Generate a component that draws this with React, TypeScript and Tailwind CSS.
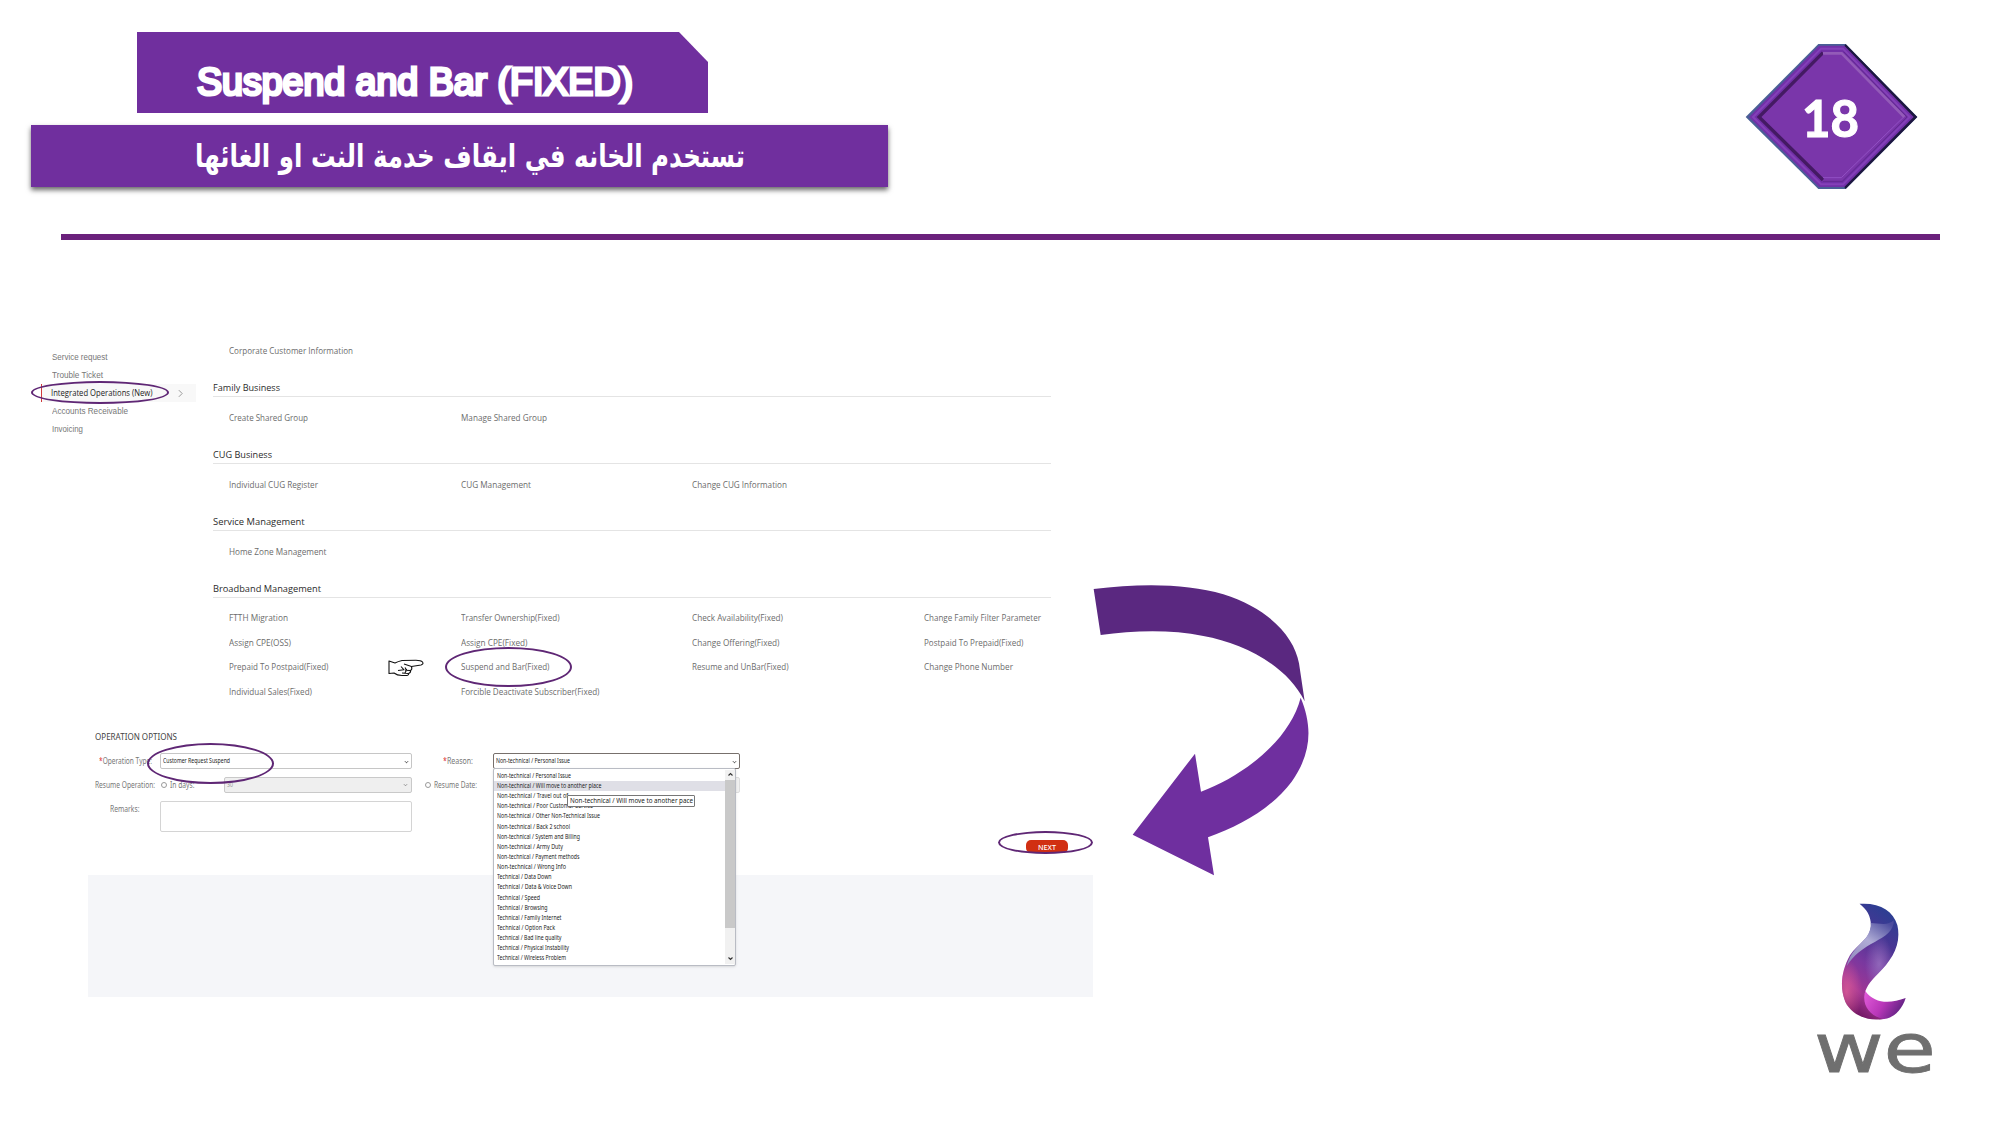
import { useLayoutEffect, useRef, type ReactNode } from "react";

/** Single line of text, condensed or widened so that it takes exactly `w` pixels. */
function Fit({ w, className = "", children }: { w: number; className?: string; children: ReactNode }) {
  const inner = useRef<HTMLSpanElement>(null);
  useLayoutEffect(() => {
    const el = inner.current;
    if (!el) return;
    el.style.transform = "none";
    const natural = el.getBoundingClientRect().width;
    if (natural > 0) el.style.transform = `scaleX(${w / natural})`;
  }, [w]);
  return (
    <span className={`block shrink-0 whitespace-nowrap ${className}`} style={{ width: w }}>
      <span ref={inner} className="inline-block origin-left">
        {children}
      </span>
    </span>
  );
}

type Item = [string, number] | null;

const sidebar: [string, number][] = [
  ["Service request", 55.5],
  ["Trouble Ticket", 51],
  ["Integrated Operations (New)", 101.5],
  ["Accounts Receivable", 76],
  ["Invoicing", 31],
];

const groups: { title: string; w: number; items: Item[] }[] = [
  { title: "Family Business", w: 67, items: [["Create Shared Group", 79], ["Manage Shared Group", 86]] },
  {
    title: "CUG Business",
    w: 59,
    items: [["Individual CUG Register", 89], ["CUG Management", 70], ["Change CUG Information", 95]],
  },
  { title: "Service Management", w: 91.5, items: [["Home Zone Management", 97.5]] },
];

const broadband: Item[] = [
  ["FTTH Migration", 59],
  ["Transfer Ownership(Fixed)", 98.5],
  ["Check Availability(Fixed)", 91],
  ["Change Family Filter Parameter", 117],
  ["Assign CPE(OSS)", 62],
  ["Assign CPE(Fixed)", 66.5],
  ["Change Offering(Fixed)", 87.5],
  ["Postpaid To Prepaid(Fixed)", 99.5],
  ["Prepaid To Postpaid(Fixed)", 99.5],
  ["Suspend and Bar(Fixed)", 88.5],
  ["Resume and UnBar(Fixed)", 96.5],
  ["Change Phone Number", 89],
  ["Individual Sales(Fixed)", 83],
  ["Forcible Deactivate Subscriber(Fixed)", 138.5],
];

const reasons: [string, number][] = [
  ["Non-technical / Personal Issue", 74],
  ["Non-technical / Will move to another place", 104.5],
  ["Non-technical / Travel out of", 71],
  ["Non-technical / Poor Customer Service", 96],
  ["Non-technical / Other Non-Technical Issue", 103],
  ["Non-technical / Back 2 school", 73],
  ["Non-technical / System and Billing", 83],
  ["Non-technical / Army Duty", 66],
  ["Non-technical / Payment methods", 82.5],
  ["Non-technical / Wrong Info", 69],
  ["Technical / Data Down", 54.5],
  ["Technical / Data & Voice Down", 75],
  ["Technical / Speed", 43],
  ["Technical / Browsing", 50.5],
  ["Technical / Family Internet", 64.5],
  ["Technical / Option Pack", 58],
  ["Technical / Bad line quality", 64.5],
  ["Technical / Physical Instability", 72],
  ["Technical / Wireless Problem", 69],
];

function Chevron({ className = "", d = "M1 1.5 3 3.5 5 1.5" }: { className?: string; d?: string }) {
  return (
    <svg viewBox="0 0 6 5" className={className} fill="none" stroke="currentColor" strokeWidth="1.1">
      <path d={d} />
    </svg>
  );
}

function Ring({ className }: { className: string }) {
  return <div className={`absolute rounded-[50%] border-2 border-[#5f2775] ${className}`} />;
}

function PageBadge() {
  return (
    <div className="relative mt-[43px] mr-[82px] h-[147px] w-[173px]">
      <svg viewBox="0 0 519 441" className="h-full w-full">
        <polygon points="2,222 220,3 302,3 517,222 302,438 220,438" fill="#4a5f96" />
        <polygon points="302,3 517,222 302,438 290,420 500,222 290,20" fill="#1d1740" />
        <polygon points="12,222 222,8 298,8 506,222 298,432 222,432" fill="#7230a8" />
        <polygon points="24,222 228,17 294,17 494,222 294,424 228,424" fill="none" stroke="#8440b8" strokeWidth="6" />
        <polygon points="36,222 232,26 290,26 484,222 290,414 232,414" fill="#7a36aa" />
        <path d="M234 29 42 222 234 411" fill="none" stroke="#441a63" strokeWidth="10" />
        <path d="M234 31H290L478 222" fill="none" stroke="#935bb8" strokeWidth="8" />
        <path d="M296 26 486 222 292 415H234" fill="none" stroke="#632a91" strokeWidth="3" />
        <path d="M234 404H289L476 222" fill="none" stroke="#9150c4" strokeWidth="3" />
      </svg>
      <div className="absolute inset-0 flex items-center justify-center pr-[2px] font-['Lato'] text-[52px] leading-none font-bold text-white [-webkit-text-stroke:1.2px_white]">
        <Fit w={57}>18</Fit>
      </div>
    </div>
  );
}

function Header() {
  return (
    <header className="h-[234px]">
      <div className="flex justify-between">
        <div className="flex flex-col pt-8">
          <h1 className="ml-[137px] flex h-[81px] w-[571px] items-center bg-[#702f9e] pt-[17px] pl-[60px] font-['Liberation_Sans'] text-[39px] leading-none text-white [-webkit-text-stroke:3.2px_white] [clip-path:polygon(0_0,542px_0,100%_30px,100%_100%,0_100%)]">
            <Fit w={436}>Suspend and Bar (FIXED)</Fit>
          </h1>
          <div className="mt-3 ml-[31px] flex h-[62px] w-[857px] items-center bg-[#702f9e] pl-[164px] font-['DejaVu_Sans'] text-[32px] leading-none font-bold text-white shadow-[0_3px_5px_rgba(0,0,0,0.6)]">
            <Fit w={550}>
              <span dir="rtl" lang="ar">تستخدم الخانه في ايقاف خدمة النت او الغائها</span>
            </Fit>
          </div>
        </div>
        <PageBadge />
      </div>
    </header>
  );
}

function Cell({ item }: { item: Item }) {
  return item ? <Fit w={item[1]}>{item[0]}</Fit> : <span />;
}

function GroupTitle({ title, w }: { title: string; w: number }) {
  return (
    <h2 className="h-[18px] border-b border-[#e4e4e4] text-[9.5px] leading-[17px] text-[#2b2b2b]">
      <Fit w={w}>{title}</Fit>
    </h2>
  );
}

function Operations() {
  return (
    <section className="mt-[102px] ml-[41px] flex h-[386px] font-['Open_Sans'] text-[9.3px] leading-[18px] text-[#6c6c6c]">
      <nav className="mt-[6px] w-[155px]">
        {sidebar.map(([label, w], i) =>
          i === 2 ? (
            <div key={label} className="flex h-[18px] items-center justify-between border-l border-[#d0393b] bg-[#f8f8f8] pr-[13px] pl-[9px] text-[#222]">
              <Fit w={w}>{label}</Fit>
              <svg viewBox="0 0 6 10" className="h-[9px] w-[5px]" fill="none" stroke="#999" strokeWidth="1.2">
                <path d="M1 1 5 5 1 9" />
              </svg>
            </div>
          ) : (
            <div key={label} className="h-[18px] pl-[10.5px] font-['Liberation_Sans'] text-[9px] text-[#777]">
              <Fit w={w}>{label}</Fit>
            </div>
          ),
        )}
      </nav>
      <div className="ml-[17px] w-[838px]">
        <div className="h-[37px] pl-4">
          <Fit w={124}>Corporate Customer Information</Fit>
        </div>
        {groups.map((g) => (
          <div key={g.title} className="h-[67px]">
            <GroupTitle title={g.title} w={g.w} />
            <div className="mt-[12px] grid grid-cols-[repeat(4,231.7px)] pl-4">
              {g.items.map((it, i) => (
                <Cell key={i} item={it} />
              ))}
            </div>
          </div>
        ))}
        <GroupTitle title="Broadband Management" w={108} />
        <div className="mt-[11px] grid auto-rows-[24.5px] grid-cols-[repeat(4,231.7px)] pl-4">
          {broadband.map((it, i) => (
            <Cell key={i} item={it} />
          ))}
        </div>
      </div>
    </section>
  );
}

function Radio() {
  return <span className="mr-[2.5px] h-[6px] w-[6px] shrink-0 rounded-full border border-[#9a9a9a]" />;
}

function ReasonMenu() {
  return (
    <div className="absolute top-[14px] left-[-1px] z-10 flex h-[198px] w-[243px] rounded-[2px] border border-[#b9bcc4] bg-white shadow-sm">
      <ul className="flex-1 pt-[2px] text-[6.4px] text-[#222]">
        {reasons.map(([label, w], i) => (
          <li key={label} className={`flex h-[10.15px] items-center pl-[3px] leading-none ${i === 1 ? "bg-[#dfdfe6]" : ""}`}>
            <Fit w={w}>{label}</Fit>
          </li>
        ))}
      </ul>
      <div className="my-[1px] flex w-[10px] flex-col items-center bg-[#f1f1f1] text-[#333]">
        <Chevron className="mt-[2px] h-[5px] w-[7px]" d="M1 3.5 3 1.5 5 3.5" />
        <div className="mt-[3px] h-[148px] w-full bg-[#c9c9c9]" />
        <Chevron className="mt-auto mb-[3px] h-[5px] w-[7px]" />
      </div>
      <div className="absolute top-[26px] left-[73px] flex h-[11.5px] w-[128px] items-center rounded-[1px] border border-[#777] bg-white pl-[2px] text-[7.5px] leading-none text-[#222]">
        <Fit w={123}>Non-technical / Will move to another pace</Fit>
      </div>
    </div>
  );
}

function OperationOptions() {
  return (
    <section className="ml-[88px] w-[1005px] font-['Noto_Sans'] text-[8px] leading-none text-[#777]">
      <div className="h-[147px] pl-[7px]">
        <h2 className="flex h-[18px] items-center text-[8.5px] text-[#444]">
          <Fit w={82}>OPERATION OPTIONS</Fit>
        </h2>
        <div className="mt-[7px] flex h-4">
          <div className="flex w-[65px] items-center pb-[1px] pl-[4px]">
            <Fit w={53}>
              <span className="text-[#d33]">*</span>Operation Type:
            </Fit>
          </div>
          <div className="flex w-[252px] items-center justify-between rounded-[2px] border border-[#c6c6c6] bg-white pt-[1px] pr-[2px] pl-[2px] text-[6.6px] text-[#222]">
            <Fit w={67}>Customer Request Suspend</Fit>
            <Chevron className="h-[4px] w-[5px] text-[#333]" />
          </div>
          <div className="flex w-[81px] items-center pb-[1px] pl-[31px]">
            <Fit w={30}>
              <span className="text-[#d33]">*</span>Reason:
            </Fit>
          </div>
          <div className="relative flex w-[247px] items-center justify-between rounded-[2px] border border-[#77706c] bg-white pt-[1px] pr-[2px] pl-[2px] text-[6.6px] text-[#222]">
            <Fit w={74}>Non-technical / Personal Issue</Fit>
            <Chevron className="h-[4px] w-[5px] text-[#333]" />
            <ReasonMenu />
          </div>
        </div>
        <div className="mt-2 flex h-4">
          <div className="flex w-[65px] items-center">
            <Fit w={60}>Resume Operation:</Fit>
          </div>
          <div className="flex w-[64px] items-center pl-[1px]">
            <Radio />
            <Fit w={24.5}>In days:</Fit>
          </div>
          <div className="flex w-[188px] items-center justify-between rounded-[2px] border border-[#c9c9c9] bg-[#efefef] pr-[3px] pl-[2px] text-[6.4px] text-[#999]">
            <Fit w={6}>30</Fit>
            <Chevron className="h-[4px] w-[5px] text-[#888]" />
          </div>
          <div className="flex w-[81px] items-center pl-[13px]">
            <Radio />
            <Fit w={43}>Resume Date:</Fit>
          </div>
          <div className="w-[247px] rounded-[2px] border border-[#dedede] bg-[#f1f1f1]" />
        </div>
        <div className="mt-2 flex h-[31px]">
          <div className="w-[65px] pt-[4px] pl-[15px]">
            <Fit w={29.5}>Remarks:</Fit>
          </div>
          <div className="w-[252px] rounded-[2px] border border-[#d4d4d4] bg-white" />
        </div>
        <div className="mt-2 flex justify-end pr-[25px]">
          <button className="flex h-[13px] w-[42px] items-center justify-center rounded-[5px] bg-[#d12f12] pt-[1px] text-[7px] leading-none font-medium text-white">
            <Fit w={18}>NEXT</Fit>
          </button>
        </div>
      </div>
      <div className="h-[122px] bg-[#f5f6f9]" />
    </section>
  );
}

function CurvedArrow() {
  return (
    <svg viewBox="0 0 810 990" className="absolute top-[560px] left-[1070px] h-[330px] w-[270px]">
      <path d="M71 87C210 70 350 70 460 103C600 148 672 230 687 310L704 424C650 315 520 250 400 228C300 208 190 212 92 225Z" fill="#5a2880" />
      <path d="M692 413C728 500 725 580 665 665C605 745 510 798 414 832L432 946 188 824 375 581 393 695C520 648 660 540 692 413Z" fill="#6f2f9f" />
    </svg>
  );
}

function PointingHand() {
  return (
    <svg viewBox="0 0 36 18" className="absolute top-[659px] left-[388px] h-[18px] w-[36px]" fill="white" stroke="#111" strokeWidth="1.1" strokeLinejoin="round">
      <path d="M1 2V14.5L6 14Q9 16.5 14 16.5H19Q21 16 20.5 14.5Q23 14 22.5 11.5Q24.5 10.5 23.5 7.5L33 6Q36 5 34.5 3Q33 1.2 28 1.2L14 1.5Q10 2.5 7 4L1 2Z" />
      <path d="M16 5 23.5 7.5M10 11.5 16 10.8 13 7.5M17 11.3 22.5 11.5M14 14 20.5 14.5M17 8.5 18.5 11 17 14" fill="none" />
    </svg>
  );
}

function BrandLogo() {
  const body =
    "M209 70C270 66 310 90 323 135C336 195 305 240 265 280C240 305 225 325 223 350C222 385 245 408 280 417C235 426 185 405 166 365C148 320 155 270 180 225C205 190 240 175 243 140C245 110 232 88 209 70Z";
  return (
    <div className="absolute top-[900px] left-[1814px] w-[122px]">
      <svg viewBox="150 60 205 365" className="ml-[26px] h-[122px] w-[68px]">
        <defs>
          <linearGradient id="body" x1="0.7" y1="0" x2="0.35" y2="1">
            <stop offset="0" stopColor="#2a3f92" />
            <stop offset="0.3" stopColor="#4b3594" />
            <stop offset="0.55" stopColor="#79389f" />
            <stop offset="0.8" stopColor="#a23593" />
            <stop offset="1" stopColor="#6f1561" />
          </linearGradient>
          <linearGradient id="fold" x1="0.8" y1="0" x2="0.1" y2="1">
            <stop offset="0" stopColor="#4c4c9e" />
            <stop offset="0.45" stopColor="#b0add6" />
            <stop offset="1" stopColor="#8f86bb" />
          </linearGradient>
          <linearGradient id="tail" x1="0" y1="0.2" x2="1" y2="0.6">
            <stop offset="0" stopColor="#e05ad8" />
            <stop offset="0.5" stopColor="#b836b8" />
            <stop offset="1" stopColor="#56207c" />
          </linearGradient>
          <radialGradient id="glow" cx="0.08" cy="0.76" r="0.28">
            <stop offset="0" stopColor="#e0609a" stopOpacity="0.8" />
            <stop offset="1" stopColor="#e0609a" stopOpacity="0" />
          </radialGradient>
          <radialGradient id="sheen" cx="0.66" cy="0.52" r="0.25">
            <stop offset="0" stopColor="#a07ac6" stopOpacity="0.7" />
            <stop offset="1" stopColor="#a07ac6" stopOpacity="0" />
          </radialGradient>
        </defs>
        <path d="M226 333C255 372 300 372 348 354C335 395 305 420 270 418C235 415 205 380 226 333Z" fill="url(#tail)" />
        <path d={body} fill="url(#body)" />
        <path d={body} fill="url(#glow)" />
        <path d={body} fill="url(#sheen)" />
        <path d="M243 128C265 128 295 138 312 120C314 150 285 170 255 185C220 203 190 225 170 258C180 215 210 195 230 170C240 155 244 142 243 128Z" fill="url(#fold)" />
      </svg>
      <div className="mt-[-8px] h-[70px] font-['DejaVu_Sans'] text-[67px] leading-[70px] text-[#6f6f6f] [-webkit-text-stroke:0.8px_#6f6f6f]">
        <Fit w={122}>we</Fit>
      </div>
    </div>
  );
}

export default function App() {
  return (
    <main className="relative flex h-[1125px] w-[2000px] flex-col overflow-hidden bg-white">
      <Header />
      <div className="ml-[61px] h-[6px] w-[1879px] shrink-0 bg-[#6b217c]" />
      <Operations />
      <OperationOptions />
      <Ring className="top-[381px] left-[31px] h-[23px] w-[138px]" />
      <Ring className="top-[647px] left-[445px] h-[40px] w-[127px]" />
      <Ring className="top-[743px] left-[147px] h-[41px] w-[127px]" />
      <Ring className="top-[831px] left-[998px] h-[23px] w-[95px]" />
      <PointingHand />
      <CurvedArrow />
      <BrandLogo />
    </main>
  );
}
